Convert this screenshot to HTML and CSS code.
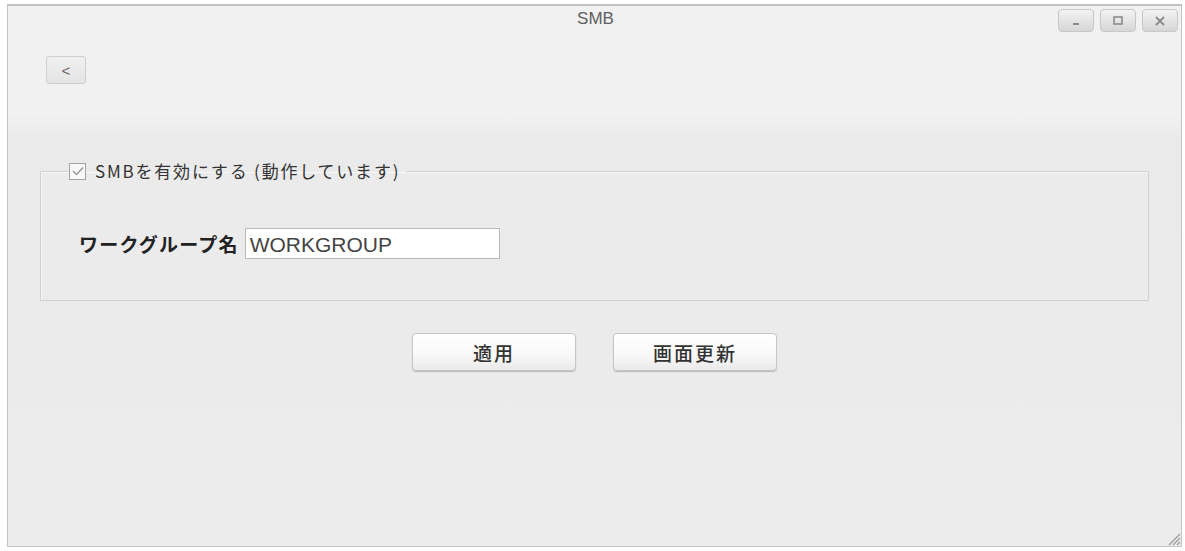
FILE: index.html
```html
<!DOCTYPE html>
<html lang="ja">
<head>
<meta charset="utf-8">
<title>SMB</title>
<link rel="stylesheet" href="styles.css">
</head>
<body>
<div class="window">
  <div class="titlebar">
    <span></span>
    <span class="title">SMB</span>
    <div class="controls">
      <span class="ctl"><svg width="12" height="10" viewBox="0 0 12 10"><rect x="3" y="7" width="6" height="2" fill="#8a8a8a"/></svg></span>
      <span class="ctl"><svg width="12" height="10" viewBox="0 0 12 10"><rect x="2" y="1" width="8" height="7" fill="none" stroke="#8a8a8a" stroke-width="1.6"/></svg></span>
      <span class="ctl"><svg width="12" height="10" viewBox="0 0 12 10"><path d="M2 1 L10 9 M10 1 L2 9" stroke="#8a8a8a" stroke-width="1.8"/></svg></span>
    </div>
  </div>
  <div class="toolbar">
    <button class="back">&lt;</button>
  </div>
  <div class="content">
    <fieldset class="group">
      <legend class="legend">
        <span class="check"><svg width="12" height="10" viewBox="0 0 12 10"><path d="M1 5 L4.5 8.5 L11 1.5" fill="none" stroke="#9a9a9a" stroke-width="1.5"/></svg></span>
        <span class="legend-text">SMBを有効にする (動作しています)</span>
      </legend>
      <div class="row">
        <span class="label">ワークグループ名</span>
        <span class="input">WORKGROUP</span>
      </div>
    </fieldset>
    <div class="actions">
      <button class="btn">適用</button>
      <button class="btn">画面更新</button>
    </div>
  </div>
  <div class="grip"><svg width="16" height="16" viewBox="0 0 16 16"><path d="M15 4 L4 15 M15 8 L8 15 M15 12 L12 15" stroke="#9c9c9c" stroke-width="1.3"/></svg></div>
</div>
</body>
</html>
```

FILE: styles.css
```css
html, body {
  margin: 0;
  padding: 0;
  background: #ffffff;
}
body {
  font-family: "Liberation Sans", "Noto Sans CJK JP", sans-serif;
  color: #333;
}
.window {
  position: relative;
  margin: 4px 3px 0 7px;
  height: 543px;
  box-sizing: border-box;
  border: 1px solid #c4c4c4;
  border-top: 2px solid #c2c2c2;
  background: linear-gradient(#f1f1f1 0, #f1f1f1 108px, #eaeaea 135px, #ececec 100%);
  display: flex;
  flex-direction: column;
}
.titlebar {
  height: 40px;
  display: grid;
  grid-template-columns: 1fr auto 1fr;
  align-items: start;
}
.title {
  font-size: 17px;
  color: #5e5e5e;
  padding-top: 3px;
  padding-left: 2px;
}
.controls {
  justify-self: end;
  display: flex;
  gap: 6px;
  padding-top: 3px;
  padding-right: 3px;
}
.ctl {
  width: 36px;
  height: 23px;
  box-sizing: border-box;
  border: 1px solid #c8c8c8;
  border-radius: 4px;
  background: linear-gradient(#f3f3f3, #d6d6d6);
  display: flex;
  align-items: center;
  justify-content: center;
}
.toolbar {
  padding: 10px 0 0 38px;
  height: 113px;
  box-sizing: border-box;
}
.back {
  width: 40px;
  height: 28px;
  border: 1px solid #cfcfcf;
  border-radius: 3px;
  background: linear-gradient(#f0f0f0, #e4e4e4);
  font-family: "Liberation Sans", sans-serif;
  font-size: 15px;
  color: #666;
  padding: 0;
}
.content {
  flex: 1;
  padding: 0 32px;
}
.group {
  margin: 0;
  padding: 0 0 0 38px;
  height: 142px;
  box-sizing: border-box;
  border: 1px solid #d0d0d0;
  border-radius: 1px;
  background: #ebebeb;
  box-shadow: 1px 1px 0 #f7f7f7 inset;
}
.legend {
  margin-left: -11px;
  padding: 0 6px 0 1px;
  display: flex;
  align-items: center;
  gap: 9px;
  font-family: "Noto Sans CJK JP", "Liberation Sans", sans-serif;
  font-size: 17px;
  font-weight: 400;
  line-height: 24px;
  color: #333;
  letter-spacing: 1.8px;
}
.check {
  width: 17px;
  height: 17px;
  box-sizing: border-box;
  border: 1px solid #a3a3a3;
  background: #f8f8f8;
  display: flex;
  align-items: center;
  justify-content: center;
}
.row {
  display: flex;
  align-items: center;
  gap: 6px;
  margin-top: 45px;
}
.label {
  font-family: "Noto Sans CJK JP", sans-serif;
  font-weight: bold;
  font-size: 19px;
  color: #222;
  letter-spacing: 1.2px;
}
.input {
  width: 255px;
  height: 31px;
  box-sizing: border-box;
  border: 1px solid #b9b9b9;
  background: #ffffff;
  font-family: "Liberation Sans", sans-serif;
  font-size: 21px;
  line-height: 24px;
  color: #444;
  padding: 4px 0 0 4px;
}
.actions {
  display: flex;
  justify-content: center;
  gap: 37px;
  margin-top: 32px;
}
.btn {
  width: 164px;
  height: 38px;
  border: 1px solid #c6c6c6;
  border-radius: 4px;
  background: linear-gradient(#ffffff 0, #f8f8f8 60%, #e9e9e9 100%);
  box-shadow: 0 1px 1px #b8b8b8;
  font-family: "Noto Sans CJK JP", sans-serif;
  font-weight: 500;
  font-size: 19px;
  letter-spacing: 2px;
  color: #333;
}
.grip {
  position: absolute;
  right: 0;
  bottom: 0;
  width: 16px;
  height: 16px;
}
```
